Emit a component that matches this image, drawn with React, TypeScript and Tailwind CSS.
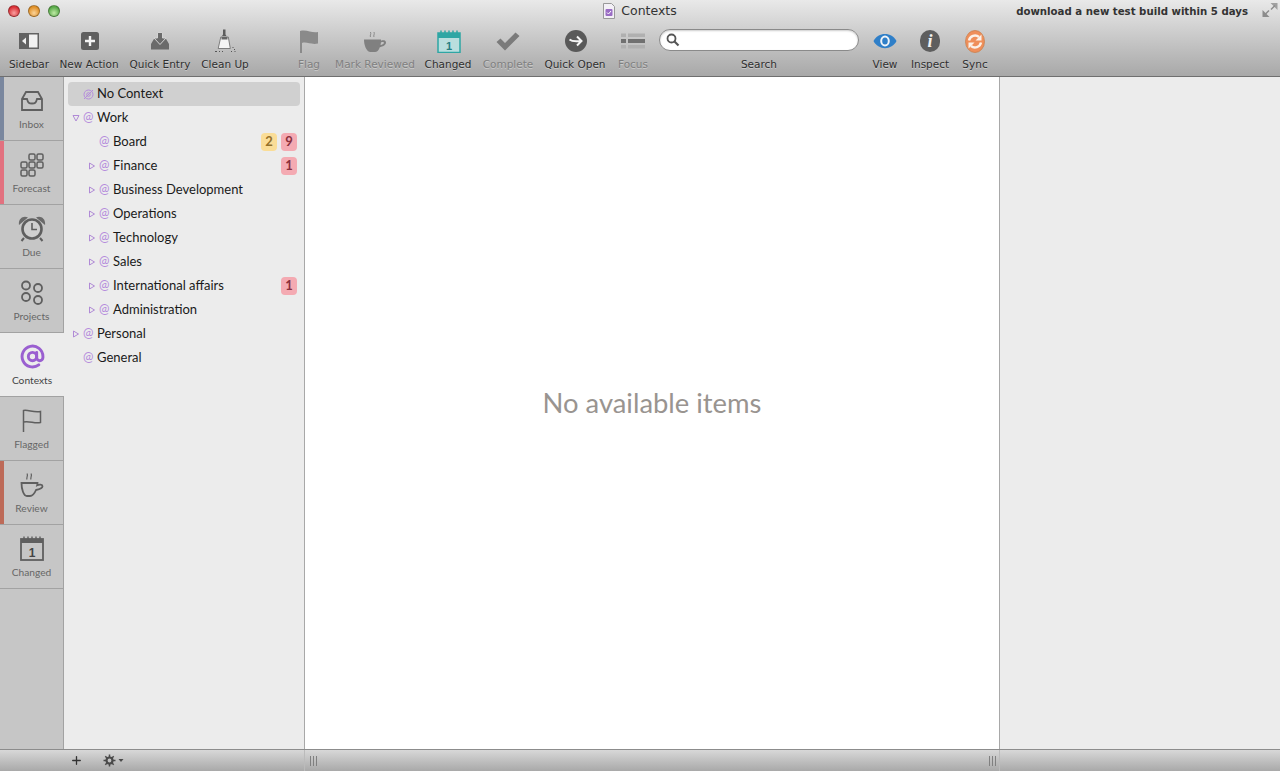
import type { ReactNode } from "react";
import { AtSign, Plus } from "lucide-react";

const lucida = "font-['DejaVu_Sans',sans-serif]";

function SidebarIcon() {
  return (
    <svg width="22" height="18" viewBox="0 0 22 18">
      <rect x="1" y="1" width="20" height="16" fill="#636363" />
      <rect x="11" y="2.500" width="8.500" height="13" fill="#f2f2f2" />
      <path d="M8 5.500v7L4 9z" fill="#f2f2f2" />
    </svg>
  );
}

function NewActionIcon() {
  return (
    <svg className="ml-[2px]" width="18" height="18" viewBox="0 0 18 18">
      <rect width="18" height="18" rx="2.500" fill="#5f5f5f" />
      <path d="M9 4v10M4 9h10" stroke="#f4f4f4" strokeWidth="2.400" />
    </svg>
  );
}

function QuickEntryIcon() {
  return (
    <svg width="20" height="18" viewBox="0 0 20 18">
      <path d="M4.500 6H7v3h6V6h2.500L19 12v5.500H1V12z" fill="#6b6b6b" />
      <path d="M7.500 0.500h5V6H16l-6 6.500L4 6h3.500z" fill="#6b6b6b" stroke="#d4d4d4" strokeWidth="1" />
    </svg>
  );
}

function BroomIcon() {
  return (
    <svg width="22" height="24" viewBox="0 0 22 24">
      <path d="M9 0.500h2.500v5l1 1.500H8l1-1.500z" fill="#5d5d5d" />
      <path d="M6.800 8h7.500l2 11.500H4.200z" fill="#f4f4f4" stroke="#666" strokeWidth="0.800" />
      <path d="M7.500 8h6v2.500h-6z" fill="#666" />
      <path d="M1 22.500h2M5 22.500h1M8 22.500h1M17 22.500h1M20 20.500h1M18.500 18.500h1M20.500 22.500h1" stroke="#555" strokeWidth="1" />
    </svg>
  );
}

function FlagIcon() {
  return (
    <svg width="20" height="23" viewBox="0 0 20 23">
      <path d="M1 1v22h2V13c5-1.500 9 2 16 .5V2C13 3.500 8-1 1 1z" fill="#8a8a8a" />
    </svg>
  );
}

function CupIcon() {
  return (
    <svg width="22" height="21" viewBox="0 0 22 21">
      <path
        fillRule="evenodd"
        d="M0 8.500h17v1.300c2-.9 5-.6 5 1.700 0 2.600-3.300 4.200-6.200 4.700C14.500 19.500 13 21 11 21H6C2 20 0 14 0 8.500zM16.500 14c2-.4 3.500-1.400 3.500-2.300 0-.9-1.800-.7-3-.2z"
        fill="#808080"
      />
      <path d="M6.500 6c-1-1.500 1-2.500 0-5M10 6c-1-1.500 1-2.500 0-5" stroke="#8a8a8a" strokeWidth="1" fill="none" />
    </svg>
  );
}

function ChangedIcon() {
  return (
    <svg className="ml-[2px]" width="24" height="23" viewBox="0 0 24 23">
      <rect x="1" y="3" width="22" height="19.500" fill="#b9dede" stroke="#2ea6a4" strokeWidth="1.500" />
      <rect x="1" y="3" width="22" height="5" fill="#2ea6a4" />
      <path d="M4 0.500v3M8 0.500v3M12 0.500v3M16 0.500v3M20 0.500v3" stroke="#2ea6a4" strokeWidth="1.500" />
      <text x="12" y="19.500" textAnchor="middle" fontSize="11" fontWeight="700" fill="#257f80" fontFamily="'Liberation Sans',sans-serif">1</text>
    </svg>
  );
}

function CheckIcon() {
  return (
    <svg width="24" height="19" viewBox="0 0 24 19">
      <path d="M0.500 10l4-3.500 4.500 4.500L19.500 0.500 23.500 4 9 18.500z" fill="#7b7b7b" />
    </svg>
  );
}

function QuickOpenIcon() {
  return (
    <svg className="ml-[2px]" width="22" height="22" viewBox="0 0 22 22">
      <circle cx="11" cy="11" r="11" fill="#595959" />
      <path d="M4.500 9.500c3 2.500 6 2 11 1.500M12 6.500l4.500 4.500-4.500 4.500" stroke="#f5f5f5" strokeWidth="2" fill="none" />
    </svg>
  );
}

function FocusIcon() {
  return (
    <svg width="24" height="16" viewBox="0 0 24 16">
      <g fill="#b0b0b0">
        <rect x="0" y="0.500" width="5" height="3.500" />
        <rect x="7" y="0.500" width="17" height="3.500" />
        <rect x="7" y="6" width="17" height="4" fill="#707070" />
        <rect x="0" y="6" width="5" height="4" fill="#707070" />
        <rect x="0" y="12" width="5" height="3.500" />
        <rect x="7" y="12" width="17" height="3.500" />
      </g>
    </svg>
  );
}

function EyeIcon() {
  return (
    <svg width="24" height="16" viewBox="0 0 24 16">
      <path d="M0.500 8C5-1.500 19-1.500 23.500 8 19 17.500 5 17.500 0.500 8z" fill="#2f7fc8" />
      <ellipse cx="12" cy="8" rx="3.800" ry="4.500" fill="none" stroke="#f0f4f8" strokeWidth="2" />
    </svg>
  );
}

function InspectIcon() {
  return (
    <div className="flex h-[22px] w-[20px] items-center justify-center rounded-full bg-[#5e5e5e] font-['Liberation_Serif',serif] text-[18px] font-bold italic leading-none text-[#f2f2f2]">
      i
    </div>
  );
}

function SyncIcon() {
  return (
    <svg width="20" height="23" viewBox="0 0 20 23">
      <ellipse cx="10" cy="11.500" rx="9.500" ry="11" fill="#ef8f5a" stroke="#c9804f" strokeWidth="0.800" />
      <path d="M4 10.500A6.200 6.200 0 0 1 14 7M16 12.500A6.200 6.200 0 0 1 6 16" fill="none" stroke="#fbf1e8" strokeWidth="2.400" />
      <path d="M16.500 4.500v6h-6zM3.500 18.500v-6h6z" fill="#fbf1e8" />
    </svg>
  );
}

function ToolItem({ label, width, dim, children }: { label: string; width: string; dim?: boolean; children: ReactNode }) {
  return (
    <div className={`flex flex-col items-center ${width}`}>
      <div className="flex h-[30px] items-center justify-center">{children}</div>
      <span className={`mt-[2px] whitespace-nowrap text-[10.5px] leading-[13px] [text-shadow:0_1px_0_rgba(255,255,255,0.35)] ${lucida} ${dim ? "text-[#808080]" : "text-[#2f2f2f]"}`}>
        {label}
      </span>
    </div>
  );
}

function Light({ className }: { className: string }) {
  return <div className={`h-[12px] w-[12px] rounded-full border border-black/30 ${className}`} />;
}

function Toolbar() {
  return (
    <div className="h-[77px] shrink-0 border-b border-[#6f6f6f] bg-gradient-to-b from-[#e9e9e9] to-[#a8a8a8]">
      <div className="grid h-[21px] grid-cols-3 items-center">
        <div className="flex gap-[8px] pl-[8px]">
          <Light className="bg-[radial-gradient(circle_at_50%_70%,#f9a0a0,#d92f35_70%)]" />
          <Light className="bg-[radial-gradient(circle_at_50%_70%,#fbd49a,#e08f26_70%)]" />
          <Light className="bg-[radial-gradient(circle_at_50%_70%,#bfeaa5,#58a948_70%)]" />
        </div>
        <div className="flex items-center justify-center gap-[6px] pt-[1px]">
          <svg width="12" height="16" viewBox="0 0 12 16">
            <path d="M0.500 0.500h8l3 3v12h-11z" fill="#f3f0f6" stroke="#999" />
            <rect x="2.500" y="6" width="7" height="7" rx="1" fill="#9a6cc4" />
            <path d="M4 9.500l1.500 1.500L8 8" stroke="#fff" fill="none" />
          </svg>
          <span className={`text-[12.5px] text-[#333] ${lucida}`}>Contexts</span>
        </div>
        <div className="flex items-center justify-end gap-[14px] pr-[2px] pt-[2px]">
          <span className={`whitespace-nowrap text-[10.2px] font-bold text-[#333] ${lucida}`}>download a new test build within 5 days</span>
          <svg className="-mt-[2px]" width="16" height="14" viewBox="0 0 16 14">
            <path d="M0.500 14V7l7 7z" fill="#8c8c8c" />
            <path d="M15.500 0v7l-7-7z" fill="#a0a0a0" />
            <path d="M3 11.500L7 7.500M13 2.500L9 6.500" stroke="#8c8c8c" strokeWidth="1.500" />
          </svg>
        </div>
      </div>
      <div className="flex pl-[4px] pt-[5px]">
        <ToolItem label="Sidebar" width="w-[50px]"><SidebarIcon /></ToolItem>
        <ToolItem label="New Action" width="w-[70px]"><NewActionIcon /></ToolItem>
        <ToolItem label="Quick Entry" width="w-[72px]"><QuickEntryIcon /></ToolItem>
        <ToolItem label="Clean Up" width="w-[58px] mr-[30px]"><BroomIcon /></ToolItem>
        <ToolItem label="Flag" width="w-[50px]" dim><FlagIcon /></ToolItem>
        <ToolItem label="Mark Reviewed" width="w-[82px]" dim><CupIcon /></ToolItem>
        <ToolItem label="Changed" width="w-[64px]"><ChangedIcon /></ToolItem>
        <ToolItem label="Complete" width="w-[56px]" dim><CheckIcon /></ToolItem>
        <ToolItem label="Quick Open" width="w-[78px]"><QuickOpenIcon /></ToolItem>
        <ToolItem label="Focus" width="w-[38px]" dim><FocusIcon /></ToolItem>
        <ToolItem label="Search" width="w-[214px]">
          <div className="-mt-[2px] flex h-[22px] w-[200px] items-center rounded-full border border-[#8a8a8a] bg-white pl-[6px] shadow-[inset_0_1px_2px_rgba(0,0,0,0.2)]">
            <svg width="14" height="14" viewBox="0 0 14 14">
              <circle cx="5.500" cy="5.500" r="4" fill="none" stroke="#555" strokeWidth="1.800" />
              <path d="M8.500 8.500l4 4" stroke="#555" strokeWidth="2.200" />
            </svg>
          </div>
        </ToolItem>
        <ToolItem label="View" width="w-[38px]"><EyeIcon /></ToolItem>
        <ToolItem label="Inspect" width="w-[52px]"><InspectIcon /></ToolItem>
        <ToolItem label="Sync" width="w-[38px]"><SyncIcon /></ToolItem>
      </div>
    </div>
  );
}

const S = "#5f5f5f";

function InboxTab() {
  return (
    <svg width="24" height="20" viewBox="0 0 24 20" fill="none" stroke={S} strokeWidth="1.800">
      <path d="M2 8l4-7h12l4 7v11H2z" />
      <path d="M2 8h5c1 4 2 4.500 5 4.500s4-.5 5-4.500h5" />
    </svg>
  );
}

function ForecastTab() {
  const cells = [[8, 0], [16, 0], [0, 8], [8, 8], [16, 8], [0, 16], [8, 16]];
  return (
    <svg width="24" height="24" viewBox="0 0 24 24" fill="none" stroke={S} strokeWidth="1.500">
      {cells.map(([x, y]) => (
        <rect key={`${x}-${y}`} x={x + 1} y={y + 1} width="6" height="6" rx="1.500" />
      ))}
    </svg>
  );
}

function DueTab() {
  return (
    <svg width="28" height="26" viewBox="0 0 28 26">
      <path d="M1 9C0 3 5-1 10 1.500zM27 9C28 3 23-1 18 1.500z" fill="#6a6a6a" />
      <circle cx="14" cy="13" r="9.500" fill="#cfcfcf" stroke={S} strokeWidth="2.600" />
      <path d="M14 7v6.500h5" fill="none" stroke={S} strokeWidth="1.600" />
      <path d="M6 22l-2.500 3M22 22l2.500 3" stroke={S} strokeWidth="2" />
    </svg>
  );
}

function ProjectsTab() {
  return (
    <svg width="24" height="26" viewBox="0 0 24 26" fill="none" stroke={S} strokeWidth="1.800">
      <circle cx="6" cy="5.500" r="4" />
      <circle cx="18" cy="8" r="4" />
      <circle cx="6" cy="17" r="4" />
      <circle cx="18" cy="20" r="4" />
    </svg>
  );
}

function FlaggedTab() {
  return (
    <svg width="20" height="24" viewBox="0 0 20 24" fill="none" stroke={S} strokeWidth="1.500">
      <path d="M1.500 23V1.500c5-1 10 2.500 17 1v11c-6 1.500-11-2-17-.5" />
    </svg>
  );
}

function ReviewTab() {
  return (
    <svg width="24" height="26" viewBox="0 0 24 26" fill="none" stroke={S} strokeWidth="1.800">
      <path d="M1.500 11h16c0 1-.1 1.500-.3 2.200 2-1 5.300-1 5.300 1 0 2.300-3.500 3.200-6.500 3.800-1.500 3.500-3.500 6-6 6H7C3.500 24 1.500 17 1.500 11z" />
      <path d="M7 7.500C6 5.500 8.500 4 7 1.500M11 7.500c-1-2 1.500-3.500 0-6" strokeWidth="1.200" />
    </svg>
  );
}

function ChangedTab() {
  return (
    <svg width="24" height="25" viewBox="0 0 24 25">
      <rect x="1" y="3" width="22" height="21" fill="none" stroke={S} strokeWidth="1.800" />
      <rect x="1" y="3" width="22" height="4" fill={S} />
      <path d="M4 0.500v3M8 0.500v3M12 0.500v3M16 0.500v3M20 0.500v3" stroke={S} strokeWidth="1.400" />
      <text x="12" y="20.500" textAnchor="middle" fontSize="12" fontWeight="700" fill="#444" fontFamily="'Liberation Sans',sans-serif">1</text>
    </svg>
  );
}

function Tab({ label, strip, active, children }: { label: string; strip?: string; active?: boolean; children: ReactNode }) {
  return (
    <div className={`relative flex h-[64px] w-[64px] flex-col items-center border-b border-[#a2a2a2] pt-[7px] ${active ? "bg-[#ececec]" : "border-r bg-[#c6c6c6]"}`}>
      {strip && <div className={`absolute bottom-0 left-0 top-0 w-[4px] ${strip}`} />}
      <div className="flex h-[33px] items-center justify-center">{children}</div>
      <span className={`font-['Lato',sans-serif] text-[10.2px] leading-[15px] ${active ? "text-[#444]" : "text-[#666]"}`}>{label}</span>
    </div>
  );
}

function TabBar() {
  return (
    <div className="flex h-full w-[64px] shrink-0 flex-col border-r border-[#a2a2a2] bg-[#c6c6c6]">
      <Tab label="Inbox" strip="bg-[#7a879e]"><InboxTab /></Tab>
      <Tab label="Forecast" strip="bg-[#e2717f]"><ForecastTab /></Tab>
      <Tab label="Due"><DueTab /></Tab>
      <Tab label="Projects"><ProjectsTab /></Tab>
      <Tab label="Contexts" active><AtSign size={25} strokeWidth={2.8} className="text-[#9a5fd0]" /></Tab>
      <Tab label="Flagged"><FlaggedTab /></Tab>
      <Tab label="Review" strip="bg-[#bd6a58]"><ReviewTab /></Tab>
      <Tab label="Changed"><ChangedTab /></Tab>
    </div>
  );
}

type Row = { label: string; level: number; arrow?: "open" | "closed"; noContext?: boolean; due?: number; over?: number };

const rows: Row[] = [
  { label: "No Context", level: 0, noContext: true },
  { label: "Work", level: 0, arrow: "open" },
  { label: "Board", level: 1, due: 2, over: 9 },
  { label: "Finance", level: 1, arrow: "closed", over: 1 },
  { label: "Business Development", level: 1, arrow: "closed" },
  { label: "Operations", level: 1, arrow: "closed" },
  { label: "Technology", level: 1, arrow: "closed" },
  { label: "Sales", level: 1, arrow: "closed" },
  { label: "International affairs", level: 1, arrow: "closed", over: 1 },
  { label: "Administration", level: 1, arrow: "closed" },
  { label: "Personal", level: 0, arrow: "closed" },
  { label: "General", level: 0 },
];

function Arrow({ open }: { open: boolean }) {
  return (
    <svg width="8" height="8" viewBox="0 0 8 8" fill="none" stroke="#b08ad6" strokeWidth="1">
      {open ? <path d="M1 1.500h6L4 7z" /> : <path d="M1.500 1l5 3-5 3z" />}
    </svg>
  );
}

function TreeRow({ row }: { row: Row }) {
  return (
    <div className={`flex h-[24px] items-center rounded-[4px] pr-[3px] ${row.level === 1 ? "pl-[20px]" : "pl-[4px]"} ${row.noContext ? "bg-[#d0d0d0]" : ""}`}>
      <div className="flex w-[11px] shrink-0 items-center">
        {row.arrow && <Arrow open={row.arrow === "open"} />}
      </div>
      <div className="flex w-[14px] shrink-0 items-center text-[12.5px] leading-none text-[#b58cdc]">
        {row.noContext ? (
          <svg width="11" height="11" viewBox="0 0 11 11" fill="none" stroke="#b58cdc" strokeWidth="1">
            <circle cx="5.500" cy="5.500" r="4.500" />
            <circle cx="5.500" cy="5.500" r="1.800" />
            <path d="M1 10L10 1" />
          </svg>
        ) : (
          <span className="-mt-[2px] font-['Lato',sans-serif]">@</span>
        )}
      </div>
      <span className="grow whitespace-nowrap font-['Lato',sans-serif] text-[13px] text-[#1a1a1a]">{row.label}</span>
      <div className="flex gap-[4px]">
        {row.due !== undefined && (
          <span className="flex h-[18px] w-[16px] items-center justify-center rounded-[4px] bg-[#fadd97] font-['Lato',sans-serif] text-[13px] font-bold text-[#94702a]">{row.due}</span>
        )}
        {row.over !== undefined && (
          <span className="flex h-[18px] w-[16px] items-center justify-center rounded-[4px] bg-[#f4aab2] font-['Lato',sans-serif] text-[13px] font-bold text-[#8a2f3c]">{row.over}</span>
        )}
      </div>
    </div>
  );
}

function Tree() {
  return (
    <div className="h-full w-[241px] shrink-0 border-r border-[#a8a8a8] bg-[#ececec] pl-[4px] pr-[4px] pt-[5px]">
      {rows.map((row) => (
        <TreeRow key={row.label} row={row} />
      ))}
    </div>
  );
}

function Grip() {
  return (
    <div className="flex gap-[2px]">
      <div className="h-[10px] w-px bg-[#808080]" />
      <div className="h-[10px] w-px bg-[#808080]" />
      <div className="h-[10px] w-px bg-[#808080]" />
    </div>
  );
}

function BottomBar() {
  return (
    <div className="flex h-[22px] shrink-0 items-center border-t border-[#8c8c8c] bg-gradient-to-b from-[#d8d8d8] to-[#a9a9a9]">
      <div className="flex h-full w-[305px] shrink-0 items-center border-r border-[#bbbbbb] pl-[70px]">
        <Plus size={13} strokeWidth={2.4} className="text-[#333]" />
        <svg className="ml-[20px]" width="22" height="13" viewBox="0 0 22 13">
          <circle cx="6.500" cy="6.500" r="3" fill="none" stroke="#4a4a4a" strokeWidth="2.200" />
          <path d="M6.500 0.500v2.500M6.500 10v2.500M0.500 6.500h2.500M10 6.500h2.500M2.300 2.300l1.700 1.700M9 9l1.700 1.700M10.700 2.300L9 4M4 9l-1.700 1.700" stroke="#4a4a4a" strokeWidth="1.500" />
          <path d="M15.500 5h5l-2.500 3z" fill="#4a4a4a" />
        </svg>
      </div>
      <div className="flex h-full w-[695px] shrink-0 items-center justify-between border-r border-[#bbbbbb] pl-[5px] pr-[3px]">
        <Grip />
        <Grip />
      </div>
    </div>
  );
}

export default function App() {
  return (
    <div className="flex h-[771px] w-[1280px] flex-col overflow-hidden bg-white">
      <Toolbar />
      <div className="flex min-h-0 grow">
        <TabBar />
        <Tree />
        <div className="flex h-full w-[695px] shrink-0 items-center justify-center border-r border-[#a8a8a8] bg-white pb-[20px]">
          <span className="font-['Lato',sans-serif] text-[27.4px] text-[#999490]">No available items</span>
        </div>
        <div className="h-full grow bg-[#ececec]" />
      </div>
      <BottomBar />
    </div>
  );
}
